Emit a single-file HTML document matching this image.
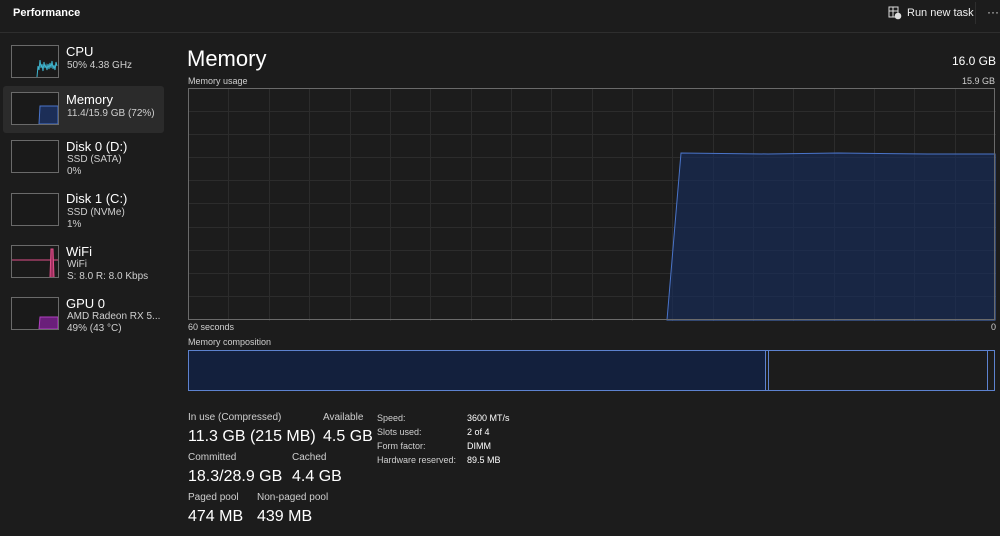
<!DOCTYPE html>
<html><head><style>
*{margin:0;padding:0;box-sizing:border-box}
body{width:1000px;height:536px;background:#1c1c1c;color:#fff;font-family:"Liberation Sans",sans-serif;position:relative;overflow:hidden}
.a{position:absolute;white-space:nowrap}
.th{position:absolute;left:11px;width:48px;height:33px;border:1px solid #6a6a6a;background:#1a1a1a}
.t1{position:absolute;left:66px;font-size:13px;color:#fff}
.t2{position:absolute;left:67px;font-size:10px;color:#cfcfcf;line-height:12px}
.lbl{font-size:10px;color:#cfcfcf}
.big{font-size:16px;color:#fff}
</style></head><body>
<div class="a" style="left:13px;top:7px;font-size:11px;font-weight:bold">Performance</div>
<div style="position:absolute;left:0;top:32px;width:1000px;height:1px;background:#2e2e2e"></div>
<svg class="a" style="left:888px;top:6px" width="14" height="14" viewBox="0 0 14 14"><rect x="1" y="1" width="9" height="10" fill="none" stroke="#ddd"/><line x1="1" y1="5" x2="10" y2="5" stroke="#ddd"/><line x1="5" y1="1" x2="5" y2="11" stroke="#ddd"/><circle cx="10" cy="10" r="3.3" fill="#ddd"/></svg>
<div class="a" style="left:907px;top:7px;font-size:11px;color:#eee">Run new task</div>
<div style="position:absolute;left:975px;top:2px;width:1px;height:22px;background:#2e2e2e"></div>
<div class="a" style="left:987px;top:5px;font-size:12px;color:#ddd">···</div>

<div style="position:absolute;left:3px;top:86px;width:161px;height:47px;background:#2b2b2b;border-radius:3px"></div>
<div class="th" style="top:45px"><svg width="46" height="31"><polyline points="25,31 26,20 27,24 28,14 29,22 30,18 31,25 32,16 33,22 34,19 35,24 36,18 37,23 38,17 39,22 40,15 41,23 42,19 43,24 44,16 45,20" fill="none" stroke="#3fb6d0"/></svg></div>
<div class="t1" style="top:44px">CPU</div><div class="t2" style="top:60px">50% 4.38 GHz</div>
<div class="th" style="top:92px"><svg width="46" height="31"><path d="M27 31 L28 13 L46 13 L46 31Z" fill="#1c2e57" stroke="#4a74c9"/></svg></div>
<div class="t1" style="top:92px">Memory</div><div class="t2" style="top:108px">11.4/15.9 GB (72%)</div>
<div class="th" style="top:140px"></div>
<div class="t1" style="top:139px">Disk 0 (D:)</div><div class="t2" style="top:154px">SSD (SATA)<br>0%</div>
<div class="th" style="top:193px"></div>
<div class="t1" style="top:191px">Disk 1 (C:)</div><div class="t2" style="top:207px">SSD (NVMe)<br>1%</div>
<div class="th" style="top:245px"><svg width="46" height="31"><line x1="0" y1="14" x2="46" y2="14" stroke="#e0508a"/><path d="M38 31 L39 3 L41 3 L42 31" fill="#a03060" stroke="#e0508a"/></svg></div>
<div class="t1" style="top:244px">WiFi</div><div class="t2" style="top:259px">WiFi<br>S: 8.0 R: 8.0 Kbps</div>
<div class="th" style="top:297px"><svg width="46" height="31"><path d="M27 31 L28 19 L46 19 L46 31Z" fill="#6a1f7a" stroke="#b040c0"/></svg></div>
<div class="t1" style="top:296px">GPU 0</div><div class="t2" style="top:311px">AMD Radeon RX 5...<br>49% (43 °C)</div>

<div class="a" style="left:187px;top:46px;font-size:22px">Memory</div>
<div class="a" style="right:4px;top:54px;font-size:12px">16.0 GB</div>
<div class="a lbl" style="left:188px;top:76px;font-size:9px">Memory usage</div>
<div class="a lbl" style="right:5px;top:76px;font-size:9px">15.9 GB</div>
<svg class="a" style="left:188px;top:88px" width="808" height="233">
<g stroke="#2c2c2c" stroke-width="1">
<path d="M0 23.5H808M0 46.5H808M0 69.5H808M0 92.5H808M0 115.5H808M0 139.5H808M0 162.5H808M0 185.5H808M0 208.5H808"/>
<path d="M40.5 0V233M81.5 0V233M121.5 0V233M162.5 0V233M202.5 0V233M242.5 0V233M283.5 0V233M323.5 0V233M363.5 0V233M404.5 0V233M444.5 0V233M484.5 0V233M525.5 0V233M565.5 0V233M605.5 0V233M646.5 0V233M686.5 0V233M726.5 0V233M767.5 0V233"/>
</g>
<path d="M479 232 L493 65 L580 66 L650 65 L740 66 L807 66 L807 232Z" fill="rgba(22,45,95,0.6)" stroke="#4a74c9"/>
<rect x="0.5" y="0.5" width="806" height="231" fill="none" stroke="#6a6a6a"/>
</svg>
<div class="a lbl" style="left:188px;top:322px;font-size:9px">60 seconds</div>
<div class="a lbl" style="right:4px;top:322px;font-size:9px">0</div>
<div class="a lbl" style="left:188px;top:337px;font-size:9px">Memory composition</div>
<svg class="a" style="left:188px;top:350px" width="808" height="42">
<rect x="0.5" y="0.5" width="577" height="40" fill="#13203d"/>
<rect x="0.5" y="0.5" width="806" height="40" fill="none" stroke="#5d82cf"/>
<path d="M577.5 0V41M580.5 0V41M799.5 0V41" stroke="#5d82cf"/>
</svg>
<div class="a lbl" style="left:188px;top:412px">In use (Compressed)</div>
<div class="a big" style="left:188px;top:428px">11.3 GB (215 MB)</div>
<div class="a lbl" style="left:323px;top:412px">Available</div>
<div class="a big" style="left:323px;top:428px">4.5 GB</div>
<div class="a lbl" style="left:188px;top:452px">Committed</div>
<div class="a big" style="left:188px;top:468px">18.3/28.9 GB</div>
<div class="a lbl" style="left:292px;top:452px">Cached</div>
<div class="a big" style="left:292px;top:468px">4.4 GB</div>
<div class="a lbl" style="left:188px;top:492px">Paged pool</div>
<div class="a big" style="left:188px;top:508px">474 MB</div>
<div class="a lbl" style="left:257px;top:492px">Non-paged pool</div>
<div class="a big" style="left:257px;top:508px">439 MB</div>
<div class="a lbl" style="left:377px;top:411px;font-size:9px;line-height:14px">Speed:<br>Slots used:<br>Form factor:<br>Hardware reserved:</div>
<div class="a lbl" style="left:467px;top:411px;font-size:9px;line-height:14px;color:#fff">3600 MT/s<br>2 of 4<br>DIMM<br>89.5 MB</div>
</body></html>
